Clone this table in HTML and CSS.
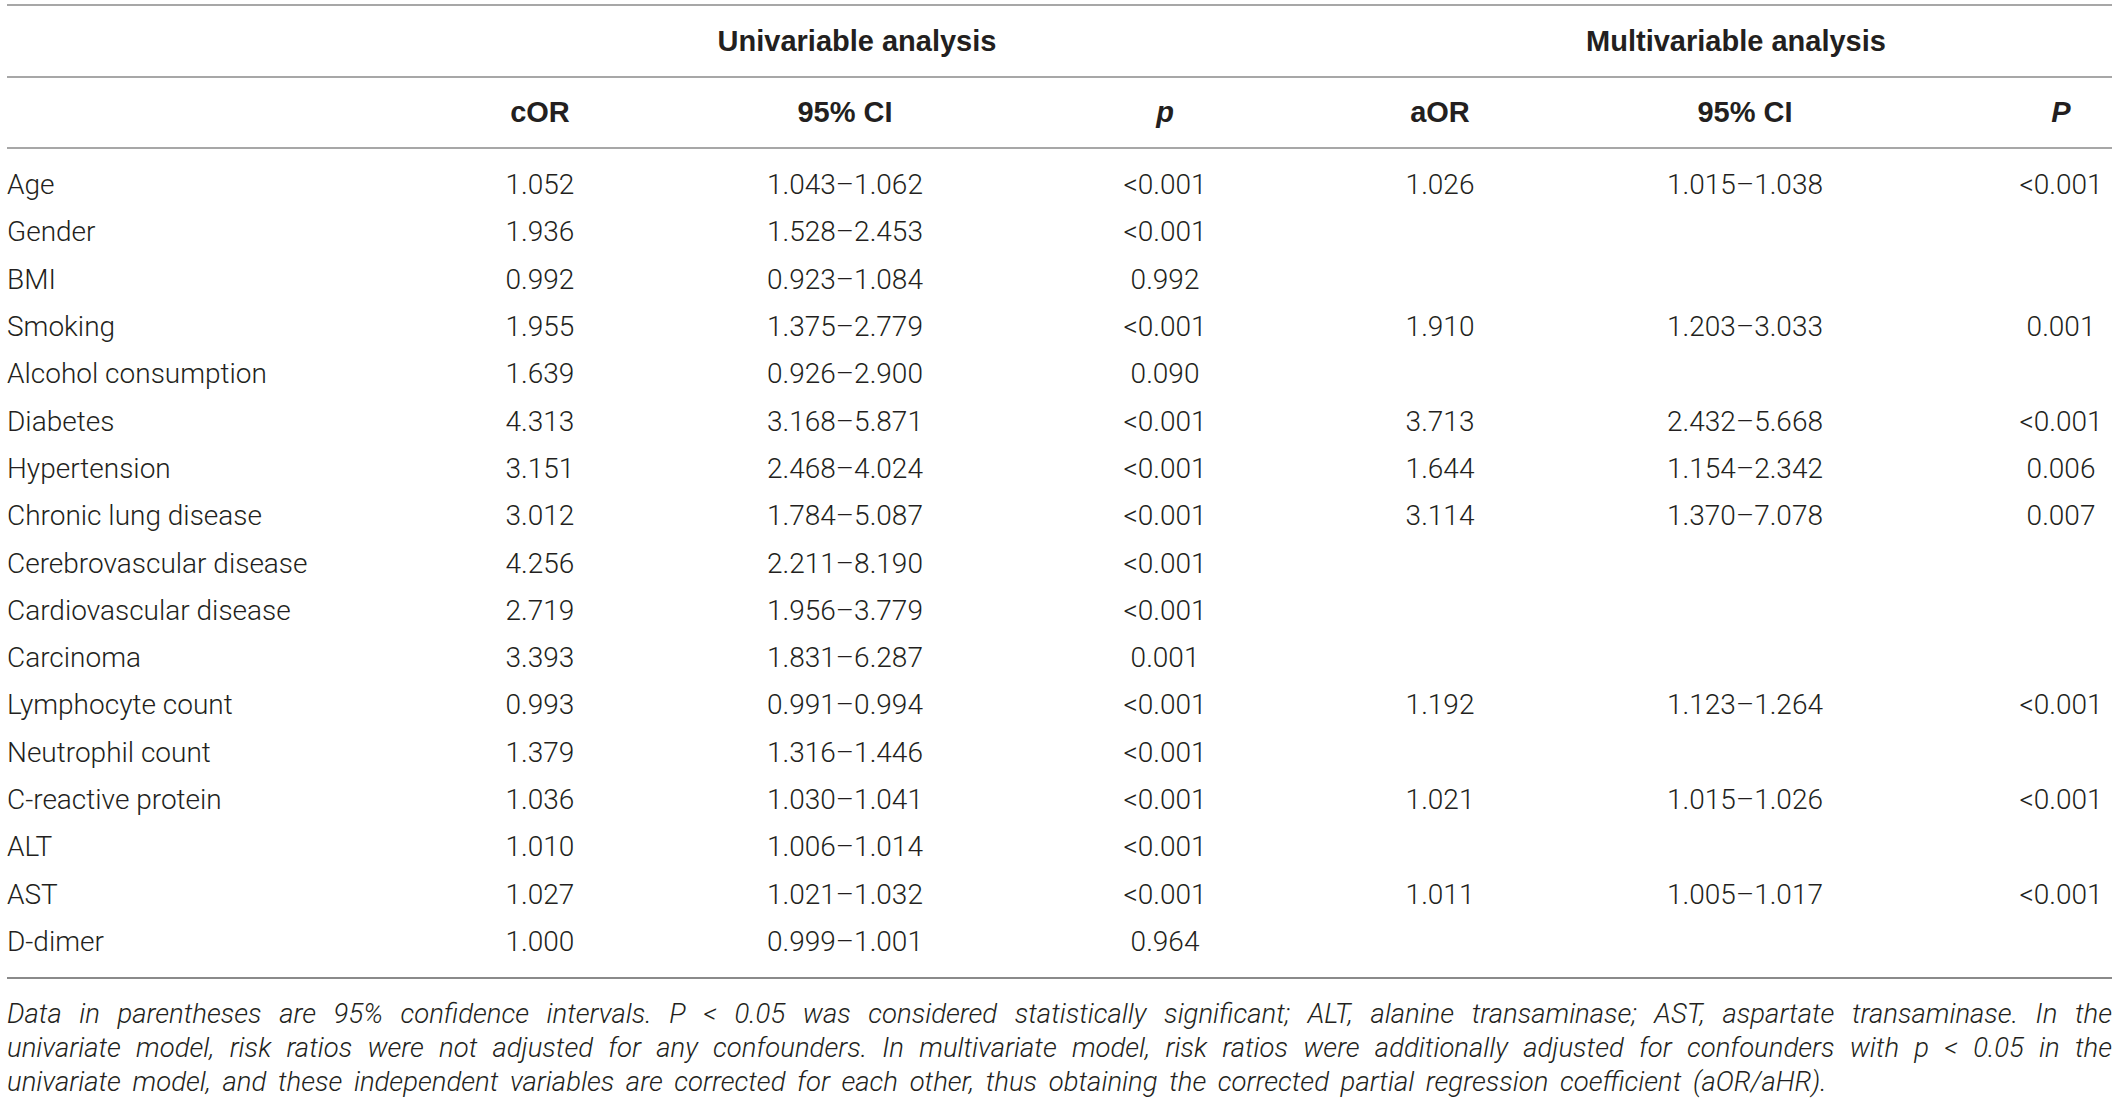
FILE: index.html
```html
<!DOCTYPE html>
<html lang="en">
<head>
    <meta charset="UTF-8">
    <title>Risk factors table</title>
    <link rel="stylesheet" href="styles.css">
</head>
<body>
    <div class="tabela-wrap">
        <table class="tabela">
            <colgroup>
                <col class="col-label">
                <col class="col-cor">
                <col class="col-ci1">
                <col class="col-p1">
                <col class="col-aor">
                <col class="col-ci2">
                <col class="col-p2">
            </colgroup>
            <thead>
                <tr class="grupo">
                    <th></th>
                    <th colspan="3" class="grupo-uni">Univariable analysis</th>
                    <th colspan="3" class="grupo-multi">Multivariable analysis</th>
                </tr>
                <tr class="colunas">
                    <th></th>
                    <th>cOR</th>
                    <th>95% CI</th>
                    <th><i>p</i></th>
                    <th>aOR</th>
                    <th>95% CI</th>
                    <th class="ultima"><i>P</i></th>
                </tr>
            </thead>
            <tbody>
                <tr><td>Age</td><td>1.052</td><td>1.043–1.062</td><td>&lt;0.001</td><td>1.026</td><td>1.015–1.038</td><td class="ultima">&lt;0.001</td></tr>
                <tr><td>Gender</td><td>1.936</td><td>1.528–2.453</td><td>&lt;0.001</td><td></td><td></td><td class="ultima"></td></tr>
                <tr><td>BMI</td><td>0.992</td><td>0.923–1.084</td><td>0.992</td><td></td><td></td><td class="ultima"></td></tr>
                <tr><td>Smoking</td><td>1.955</td><td>1.375–2.779</td><td>&lt;0.001</td><td>1.910</td><td>1.203–3.033</td><td class="ultima">0.001</td></tr>
                <tr><td>Alcohol consumption</td><td>1.639</td><td>0.926–2.900</td><td>0.090</td><td></td><td></td><td class="ultima"></td></tr>
                <tr><td>Diabetes</td><td>4.313</td><td>3.168–5.871</td><td>&lt;0.001</td><td>3.713</td><td>2.432–5.668</td><td class="ultima">&lt;0.001</td></tr>
                <tr><td>Hypertension</td><td>3.151</td><td>2.468–4.024</td><td>&lt;0.001</td><td>1.644</td><td>1.154–2.342</td><td class="ultima">0.006</td></tr>
                <tr><td>Chronic lung disease</td><td>3.012</td><td>1.784–5.087</td><td>&lt;0.001</td><td>3.114</td><td>1.370–7.078</td><td class="ultima">0.007</td></tr>
                <tr><td>Cerebrovascular disease</td><td>4.256</td><td>2.211–8.190</td><td>&lt;0.001</td><td></td><td></td><td class="ultima"></td></tr>
                <tr><td>Cardiovascular disease</td><td>2.719</td><td>1.956–3.779</td><td>&lt;0.001</td><td></td><td></td><td class="ultima"></td></tr>
                <tr><td>Carcinoma</td><td>3.393</td><td>1.831–6.287</td><td>0.001</td><td></td><td></td><td class="ultima"></td></tr>
                <tr><td>Lymphocyte count</td><td>0.993</td><td>0.991–0.994</td><td>&lt;0.001</td><td>1.192</td><td>1.123–1.264</td><td class="ultima">&lt;0.001</td></tr>
                <tr><td>Neutrophil count</td><td>1.379</td><td>1.316–1.446</td><td>&lt;0.001</td><td></td><td></td><td class="ultima"></td></tr>
                <tr><td>C-reactive protein</td><td>1.036</td><td>1.030–1.041</td><td>&lt;0.001</td><td>1.021</td><td>1.015–1.026</td><td class="ultima">&lt;0.001</td></tr>
                <tr><td>ALT</td><td>1.010</td><td>1.006–1.014</td><td>&lt;0.001</td><td></td><td></td><td class="ultima"></td></tr>
                <tr><td>AST</td><td>1.027</td><td>1.021–1.032</td><td>&lt;0.001</td><td>1.011</td><td>1.005–1.017</td><td class="ultima">&lt;0.001</td></tr>
                <tr><td>D-dimer</td><td>1.000</td><td>0.999–1.001</td><td>0.964</td><td></td><td></td><td class="ultima"></td></tr>
            </tbody>
        </table>
        <p class="nota">Data in parentheses are 95% confidence intervals. P &lt; 0.05 was considered statistically significant; ALT, alanine transaminase; AST, aspartate transaminase. In the univariate model, risk ratios were not adjusted for any confounders. In multivariate model, risk ratios were additionally adjusted for confounders with p &lt; 0.05 in the univariate model, and these independent variables are corrected for each other, thus obtaining the corrected partial regression coefficient (aOR/aHR).</p>
    </div>
</body>
</html>
```

FILE: styles.css
```css
body {
    font-family: Roboto, "Liberation Sans", Arial, sans-serif;
    font-weight: 300;
    margin: 0;
    padding: 0;
    background-color: #ffffff;
    color: #231f20;
}

.tabela-wrap {
    padding: 4px 6px 0 7px;
}

.tabela {
    width: 100%;
    border-collapse: collapse;
    table-layout: fixed;
    font-size: 28px;
}

.col-label { width: 429px; }
.col-cor { width: 208px; }
.col-ci1 { width: 402px; }
.col-p1 { width: 238px; }
.col-aor { width: 312px; }
.col-ci2 { width: 298px; }
.col-p2 { width: auto; }

.tabela th {
    font-family: "Liberation Sans", Arial, sans-serif;
    font-size: 29px;
    font-weight: 700;
    text-align: center;
    padding: 0;
}

.grupo th {
    height: 70px;
    border-top: 2px solid #a7a7a7;
    border-bottom: 2px solid #a7a7a7;
}

.grupo .grupo-uni {
    padding-right: 6px;
}

.grupo .grupo-multi {
    padding-left: 76px;
}

.colunas th {
    height: 69px;
    border-bottom: 2px solid #a7a7a7;
}

.tabela td {
    height: 47.3px;
    padding: 0;
    text-align: center;
    white-space: nowrap;
}

.tabela td:first-child {
    text-align: left;
}

.tabela .ultima {
    padding-left: 116px;
}

.tabela tbody tr:first-child td {
    padding-top: 12px;
}

.tabela tbody tr:last-child td {
    padding-bottom: 12px;
    border-bottom: 2px solid #8a8a8a;
}

.nota {
    margin: 18px 0 0;
    font-size: 27.5px;
    font-style: italic;
    line-height: 34px;
    word-spacing: 5px;
    text-align: justify;
}
```
